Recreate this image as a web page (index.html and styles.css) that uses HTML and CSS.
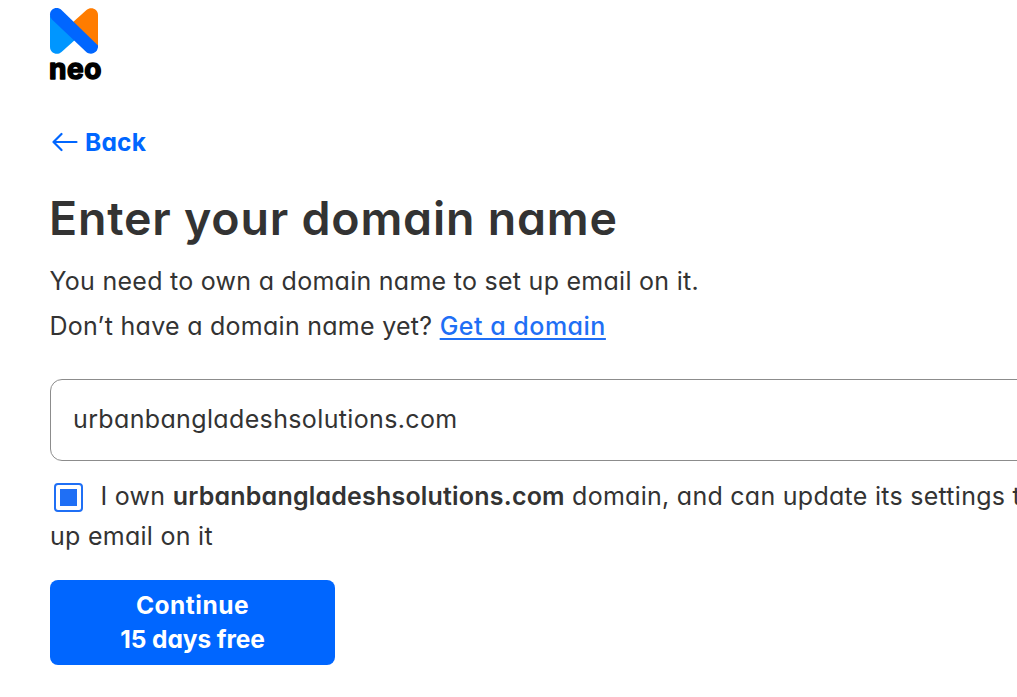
FILE: index.html
```
<!DOCTYPE html>
<html lang="en">
<head>
  <meta charset="UTF-8" />
  <meta name="viewport" content="width=device-width, initial-scale=1.0"/>
  <title>Neo - Enter your domain name</title>
  <link rel="stylesheet" href="styles.css">
</head>
<body>

  <div class="container">
    <svg class="logo" width="56" height="76" viewBox="0 0 56 76">
      <path fill="#0096ff" d="M0 7v32c0 6 7 9 11.500 5L26 31z"/>
      <path fill="#ff7c00" d="M48 40V7c0-6-7-9-11.500-5L22 15z"/>
      <path fill="#0066ff" d="M0 6.500C0 .7 7-2.200 11.500 2L48 37.500c.5 7-7 10.700-12 6.200L2 11.500C.8 10 0 8.500 0 6.500z"/>
      <text class="logo-text" x="-1 17 34.300" y="71">neo</text>
    </svg>

    <a class="back">
      <svg width="26" height="20" viewBox="0 0 26 20">
        <path d="M24.500 10H1.500M9.500 2L1.500 10l8 8"/>
      </svg>
      <span>Back</span>
    </a>

    <h1>Enter your domain name</h1>

    <p class="intro">You need to own a domain name to set up email on it.<br>
      Don’t have a domain name yet? <a class="link">Get a domain</a></p>

    <input class="domain" type="text" value="urbanbangladeshsolutions.com" />

    <label class="confirm"><span class="checkbox"></span>I own <b>urbanbangladeshsolutions.com</b> domain, and can update its settings to set<br>
      up email on it</label>

    <button class="continue">Continue<br><span class="trial">15 days free</span></button>
  </div>

</body>
</html>
```

FILE: styles.css
```
body {
  margin: 0;
  font-family: Inter, sans-serif;
  font-size: 25px;
  letter-spacing: 0.27px;
  font-feature-settings: "cv11";
  background: #fff;
  color: #333;
  overflow: hidden;
}
.container {
  box-sizing: border-box;
  width: 100%;
  padding: 8px 0 0 50px;
  overflow: hidden;
}
.logo {
  display: block;
  overflow: visible;
}
.logo-text {
  font-size: 28px;
  font-weight: 750;
  letter-spacing: 0;
  fill: #000;
  stroke: #000;
  stroke-width: 1.5;
  stroke-linejoin: round;
}
.back {
  display: flex;
  align-items: center;
  width: fit-content;
  height: 40px;
  margin-top: 38px;
  padding-left: 2px;
  gap: 7px;
  color: #0066ff;
  font-size: 24.5px;
  font-weight: 650;
  letter-spacing: 0.2px;
  cursor: pointer;
}
.back svg {
  fill: none;
  stroke: #0066ff;
  stroke-width: 2.2;
  stroke-linecap: round;
  stroke-linejoin: round;
}
h1 {
  margin: 26px 0 0 -1px;
  font-size: 46.5px;
  line-height: 60px;
  font-weight: 620;
  letter-spacing: 0.8px;
}
.intro {
  margin: 11px 0 0 -0.5px;
  line-height: 45px;
}
.link {
  color: #1f6ff5;
  font-weight: 500;
  letter-spacing: 0.5px;
  text-decoration: underline;
  text-decoration-thickness: 2px;
  text-underline-offset: 3px;
  cursor: pointer;
}
.domain {
  display: block;
  box-sizing: border-box;
  width: 1060px;
  height: 82px;
  margin-top: 30px;
  padding: 0 22px 2px;
  border: 1px solid #8c8c8c;
  border-radius: 12px;
  font: inherit;
  font-feature-settings: inherit;
  letter-spacing: 0.36px;
  color: #333;
}
.confirm {
  display: block;
  margin-top: 15px;
  line-height: 40px;
  white-space: nowrap;
}
.checkbox {
  display: inline-block;
  box-sizing: border-box;
  width: 29px;
  height: 29px;
  margin: 0 17.5px 0 4px;
  padding: 4px;
  border: 2px solid #1f6ff5;
  border-radius: 4px;
  background: #1f6ff5 content-box;
  vertical-align: -7px;
}
.confirm b {
  font-weight: 600;
  letter-spacing: 0.2px;
}
.continue {
  display: block;
  width: 285px;
  height: 85px;
  margin-top: 24px;
  padding: 0 0 2px;
  border: none;
  border-radius: 8px;
  background: #0066ff;
  color: #fff;
  font: inherit;
  font-feature-settings: inherit;
  font-size: 24.5px;
  font-weight: 650;
  letter-spacing: 0.5px;
  line-height: 34px;
  cursor: pointer;
}
.trial {
  letter-spacing: -0.1px;
}
```
